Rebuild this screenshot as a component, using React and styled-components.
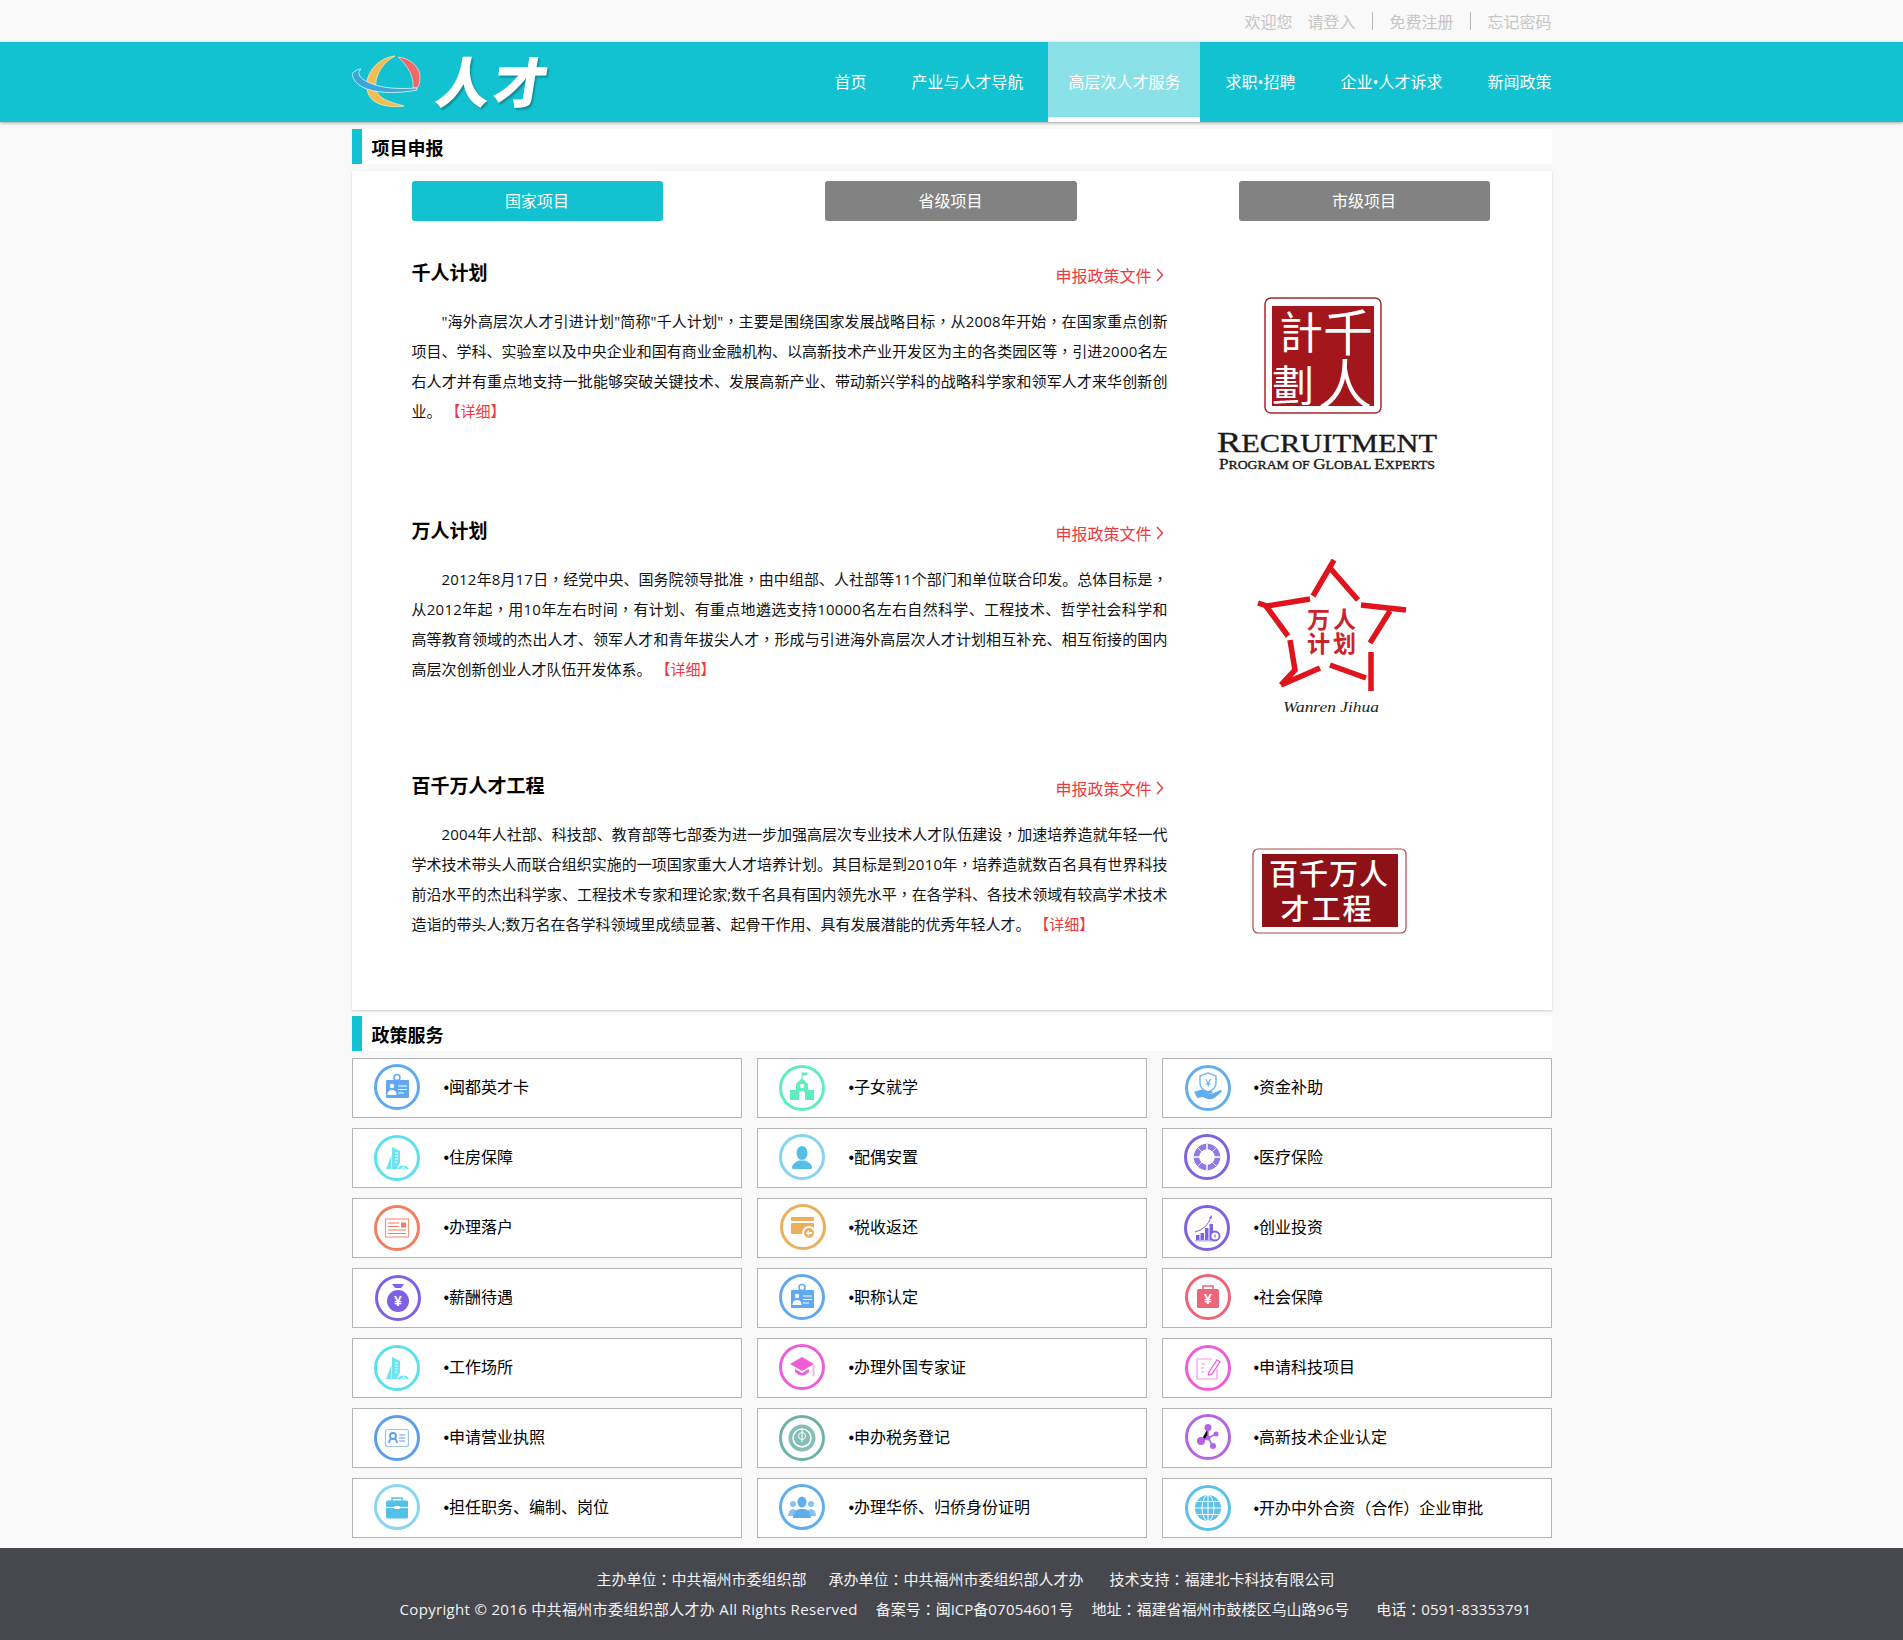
import React from "react";
import styled, { createGlobalStyle } from "styled-components";

const GlobalStyle = createGlobalStyle`
  * {
    box-sizing: border-box;
  }

  body {
    margin: 0;
    background-color: #f9f9f9;
    font-family: "Open Sans", "Noto Sans CJK SC", sans-serif;
    color: #111;
  }
`;

const Container = styled.div`
  width: 1200px;
  margin: 0 auto;
`;

const TopBar = styled.div`
  height: 42px;
`;

const TopLinks = styled(Container)`
  height: 100%;
  display: flex;
  justify-content: flex-end;
  align-items: center;
  font-size: 16px;
  color: #c6c6c6;
`;

const Welcome = styled.span`
  margin-right: 15px;
`;

const Divider = styled.i`
  width: 1px;
  height: 18px;
  margin: 0 16px 0 17px;
  background-color: #b9b9b9;
`;

const Header = styled.header`
  height: 80px;
  background-color: #13c2d0;
  box-shadow: 0 1px 3px rgba(0, 0, 0, 0.35);
`;

const HeaderInner = styled(Container)`
  height: 100%;
  display: flex;
  justify-content: space-between;
`;

const Logo = styled.div`
  display: flex;
  align-items: center;
  gap: 15px;
`;

const LogoText = styled.span`
  font-size: 54px;
  line-height: 1;
  font-weight: 900;
  color: #fff;
  letter-spacing: 3px;
  transform: skewX(-9deg);
  text-shadow: 2px 2px 2px rgba(0, 70, 80, 0.45);
`;

const Nav = styled.nav`
  display: flex;
  gap: 5px;
`;

const NavItem = styled.a`
  display: flex;
  align-items: center;
  padding: 2px 20px 0;
  font-size: 16px;
  color: #fff;
  background-color: ${(p) => (p.$active ? "#8ae1e8" : "transparent")};
  border-bottom: 5px solid ${(p) => (p.$active ? "#fff" : "transparent")};

  &:last-child {
    padding-right: 0;
  }
`;

const SectionTitle = styled.h2`
  height: 35px;
  margin: ${(p) => p.$top}px 0 0;
  padding-left: 10px;
  border-left: 10px solid #13c2d0;
  background-color: #fff;
  font-size: 18px;
  line-height: 38px;
  font-weight: 700;
  color: #000;
`;

const Panel = styled.div`
  height: 839px;
  margin-top: 7px;
  padding: 10px 62px 0 60px;
  background-color: #fff;
  box-shadow: 0 1px 2px rgba(0, 0, 0, 0.18);
`;

const Tabs = styled.div`
  display: flex;
  justify-content: space-between;
  margin-bottom: 26px;
`;

const Tab = styled.div`
  width: ${(p) => (p.$wide ? 252 : 251)}px;
  height: 40px;
  border-radius: 3px;
  background-color: ${(p) => (p.$active ? "#13c2d0" : "#828282")};
  color: #fff;
  font-size: 16px;
  line-height: 40px;
  text-align: center;
`;

const Project = styled.section`
  height: ${(p) => p.$height}px;
  display: flex;
`;

const ProjectBody = styled.div`
  width: 756px;
  flex-shrink: 0;
`;

const ProjectHead = styled.div`
  height: 50px;
  margin-bottom: 9px;
  padding-bottom: 1px;
  display: flex;
  justify-content: space-between;
  align-items: center;
`;

const ProjectName = styled.h3`
  margin: 0;
  font-size: 19px;
  font-weight: 700;
  color: #000;
`;

const PolicyLink = styled.a`
  display: flex;
  align-items: center;
  gap: 4px;
  margin: 6px 4px 0 0;
  font-size: 16px;
  color: #ef3a40;
`;

const Summary = styled.p`
  margin: 0;
  font-size: 15px;
  line-height: 30px;
  text-indent: 2em;
  text-align: justify;
  color: #111;
`;

const More = styled.a`
  color: #ef3a40;
`;

const Num = styled.span`
  letter-spacing: 0.2px;
`;

const Punct = styled.span`
  font-family: "Noto Sans CJK TC", sans-serif;
`;

const Seal = styled.div`
  padding: ${(p) => p.$top}px 0 0 ${(p) => p.$left}px;
`;

const ServiceGrid = styled.div`
  margin-top: 7px;
  display: grid;
  grid-template-columns: repeat(3, 390px);
  grid-auto-rows: 60px;
  column-gap: 15px;
  row-gap: 10px;
`;

const Service = styled.a`
  display: flex;
  align-items: flex-start;
  background-color: #fff;
  border: 1px solid #b5b5b5;
  font-size: 16px;
  color: #000;
`;

const ServiceIcon = styled.div`
  width: 91px;
  flex-shrink: 0;
  padding: ${(p) => p.$top}px 0 0 ${(p) => p.$left}px;
  line-height: 0;
`;

const ServiceLabel = styled.span`
  line-height: 57px;
`;

const Bullet = styled.span`
  font-family: "Liberation Sans", sans-serif;
`;

const Footer = styled.footer`
  height: 92px;
  margin-top: 10px;
  padding: 16px 0 0 28px;
  background-color: #47484d;
  color: #f2f2f2;
  font-size: 15px;
`;

const FooterLine = styled.div`
  height: 30px;
  line-height: 30px;
  display: flex;
  justify-content: center;
  gap: ${(p) => p.$gap}px;
`;

const FooterItem = styled.span`
  margin-left: ${(p) => p.$push || 0}px;
  letter-spacing: ${(p) => p.$spread || 0}px;
`;

// digits run a little wider than the font's, and the full-width ，：（） sit centred
function Copy({ children }) {
  return children.split(/(\d+|[，：（）])/).map((part, i) => {
    if (/^\d/.test(part)) return <Num key={i}>{part}</Num>;
    if (/^[，：（）]$/.test(part)) return <Punct key={i}>{part}</Punct>;
    return part;
  });
}

function Ring({ color, children }) {
  return (
    <svg width="46" height="46" viewBox="0 0 46 46">
      <circle cx="23" cy="23" r="21.5" fill="#fff" stroke={color} strokeWidth="3" />
      {children}
    </svg>
  );
}

const Badge = ({ c }) => (
  <Ring color={c}>
    <circle cx="23" cy="13.5" r="3" fill="none" stroke={c} strokeWidth="1.5" />
    <rect x="12" y="16" width="23" height="18" rx="1" fill={c} />
    <circle cx="18" cy="22" r="2.2" fill="#fff" />
    <path d="M13.5 31q0-5 4.5-5t4.500 5z" fill="#fff" />
    <path d="M24 22h9M24 25.500h9M24 29h6" stroke="#fff" strokeWidth="1.2" />
  </Ring>
);

const School = ({ c }) => (
  <Ring color={c}>
    <path d="M23 7.500v6M23 8h5v2h-5" fill={c} stroke={c} strokeWidth="1" />
    <path d="M23 13l6 6v6h6v10h-9v-6a3 3 0 0 0-6 0v6h-9V25h6v-6z" fill={c} />
    <circle cx="23" cy="21" r="2.200" fill="#fff" />
  </Ring>
);

const HandShield = ({ c }) => (
  <Ring color={c}>
    <path d="M23 8l8 3v7q0 6-8 9q-8-3-8-9v-7z" fill="none" stroke={c} strokeWidth="1.500" opacity="0.85" />
    <text x="23" y="22" fontSize="11" textAnchor="middle" fontFamily="Liberation Sans, sans-serif" fill={c}>¥</text>
    <path d="M9 27l6-2q3-1 6 1h5q2 0 1.500 2h-6l6 .500 8-3.500q2 0 1 2l-7 6q-3 2-7 1l-5-2-5 1z" fill={c} />
  </Ring>
);

const Towers = ({ c }) => (
  <Ring color="#5ce0ec">
    <path d="M12 34l5.500-14v14z" fill={c} />
    <path d="M18 34V12l8 4v11l-3 7z" fill={c} />
    <path d="M21 18h3M21 21h3M21 24h3M21 27h2" stroke="#fff" strokeWidth="1" />
    <path d="M23.500 34a6.500 6.500 0 0 1 11.500 0z" fill={c} />
    <path d="M29.500 28v6M27 34a3 3 0 0 1 5 0" fill="none" stroke="#fff" strokeWidth="0.800" />
  </Ring>
);

const Person = ({ c }) => (
  <Ring color="#87d4f2">
    <ellipse cx="23" cy="19" rx="5.500" ry="7" fill={c} />
    <path d="M13 34q0-5 7-7.500h6q7 2.500 7 7.500q0 1-2 1H15q-2 0-2-1z" fill={c} />
  </Ring>
);

const Medical = ({ c }) => (
  <Ring color={c}>
    <circle cx="23" cy="23" r="10.500" fill="none" stroke={c} strokeWidth="5.500" opacity="0.85" />
    <path d="M23 10v26M10 23h26" stroke="#fff" strokeWidth="1.500" />
    <path d="M23 16.500v13M16.500 23h13" stroke="#fff" strokeWidth="5" />
    <path d="M14 14l18 18M32 14L14 32" stroke="#fff" strokeWidth="0.800" />
  </Ring>
);

const Document = ({ c }) => (
  <Ring color={c}>
    <rect x="11.500" y="14" width="23" height="18" fill="none" stroke={c} strokeWidth="1.200" opacity="0.8" />
    <rect x="27" y="17.500" width="5" height="5" fill={c} />
    <path d="M14 18h11M14 21.500h11M14 25h18M14 28.500h18" stroke={c} strokeWidth="1.200" />
  </Ring>
);

const CardBack = ({ c }) => (
  <Ring color={c}>
    <rect x="11" y="13" width="23" height="4" rx="1" fill={c} />
    <rect x="11" y="19" width="23" height="11" rx="1" fill={c} />
    <circle cx="29" cy="29" r="7" fill="#fff" />
    <circle cx="29" cy="29" r="5" fill={c} />
    <path d="M26 29l3-3v2h3v2h-3v2z" fill="#fff" />
  </Ring>
);

const Growth = ({ c }) => (
  <Ring color={c}>
    <path d="M11 35h19v1.500H11z" fill={c} opacity="0.5" />
    <path d="M12 30h3.500v5H12zM16.500 28h3.500v7h-3.500zM21 23h3.500v12H21zM25.500 19h3.500v16h-3.500z" fill={c} />
    <path d="M11 27Q23 24 27 12" fill="none" stroke={c} strokeWidth="1" />
    <path d="M28 10l-.500 4-2.500-1.500z" fill={c} />
    <circle cx="31" cy="31" r="4.500" fill="#fff" stroke={c} strokeWidth="1.800" />
    <path d="M31 29.500v3" stroke={c} strokeWidth="1.200" />
  </Ring>
);

const MoneyBag = ({ c }) => (
  <Ring color={c}>
    <path d="M17 9h12l-3 4h-6z" fill={c} />
    <circle cx="23" cy="26" r="11" fill={c} />
    <text x="23" y="31" fontSize="14" fontWeight="700" textAnchor="middle" fontFamily="Liberation Sans, sans-serif" fill="#fff">¥</text>
  </Ring>
);

const YenCase = ({ c }) => (
  <Ring color={c}>
    <path d="M18 15v-3h10v3" fill="none" stroke={c} strokeWidth="1.500" />
    <rect x="12" y="15" width="22" height="19" rx="1.500" fill={c} />
    <text x="23" y="30" fontSize="14" fontWeight="700" textAnchor="middle" fontFamily="Liberation Sans, sans-serif" fill="#fff">¥</text>
  </Ring>
);

const GradCap = ({ c }) => (
  <Ring color={c}>
    <path d="M11 20l12-7 12 7-12 7z" fill={c} />
    <path d="M16 25l7 4 7-4v3q-7 7-14 0z" fill={c} />
    <path d="M34.500 21v11" stroke={c} strokeWidth="2" opacity="0.45" />
  </Ring>
);

const PenNote = ({ c }) => (
  <Ring color={c}>
    <path d="M27 14H12v20h20V24" fill="none" stroke={c} strokeWidth="1.200" opacity="0.65" />
    <path d="M16 19h4M16 23h3M16 27h3" stroke={c} strokeWidth="1.200" opacity="0.65" />
    <path d="M24 27l8-12 3 2-8 12-3.500 1z" fill="none" stroke={c} strokeWidth="1.300" />
  </Ring>
);

const License = ({ c }) => (
  <Ring color={c}>
    <rect x="11.500" y="14.500" width="23" height="17" rx="2" fill="none" stroke={c} strokeWidth="1.200" opacity="0.6" />
    <circle cx="19" cy="21" r="3" fill="none" stroke={c} strokeWidth="1.800" />
    <path d="M15 28q0-3 2-4M23 28q0-3-2-4" fill="none" stroke={c} strokeWidth="1.800" />
    <path d="M25 20h6M25 23h6M25 26h6" stroke={c} strokeWidth="1.200" />
  </Ring>
);

const TaxMark = ({ c }) => (
  <Ring color={c}>
    <circle cx="23" cy="23" r="13.500" fill={c} opacity="0.85" />
    <circle cx="23" cy="23" r="9" fill="none" stroke="#fff" strokeWidth="1.500" />
    <circle cx="23" cy="21" r="3.500" fill="none" stroke="#fff" strokeWidth="1" />
    <path d="M23 15v12M18 30q5 3 10 0" fill="none" stroke="#fff" strokeWidth="1.200" />
  </Ring>
);

const Molecule = ({ c }) => (
  <Ring color={c}>
    <path d="M23 14v10l-7 3M23 24l8-4M23 24l5 8" stroke={c} strokeWidth="1.500" />
    <circle cx="23" cy="13.500" r="3.500" fill={c} />
    <circle cx="23" cy="24" r="2.500" fill={c} />
    <circle cx="31" cy="20" r="2.500" fill={c} />
    <circle cx="16" cy="27" r="4" fill={c} />
    <circle cx="28" cy="32" r="3" fill={c} />
  </Ring>
);

const Briefcase = ({ c }) => (
  <Ring color="#8ad6f2">
    <path d="M18 17v-3h10v3" fill="none" stroke={c} strokeWidth="1.500" />
    <rect x="12" y="16.500" width="22" height="18" rx="1.500" fill={c} />
    <path d="M12 23.500h22" stroke="#fff" strokeWidth="1.200" />
    <rect x="20.500" y="22" width="5" height="3" fill="#fff" />
  </Ring>
);

const People = ({ c }) => (
  <Ring color={c}>
    <circle cx="14" cy="20" r="3" fill={c} opacity="0.75" />
    <circle cx="32" cy="20" r="3" fill={c} opacity="0.75" />
    <path d="M9 32q0-6 5-7l3 1v6zM37 32q0-6-5-7l-3 1v6z" fill={c} opacity="0.75" />
    <ellipse cx="23" cy="18" rx="4.500" ry="5.500" fill={c} />
    <path d="M14 34q0-7 6-9h6q6 2 6 9z" fill={c} />
  </Ring>
);

const Globe = ({ c }) => (
  <Ring color={c}>
    <circle cx="23" cy="23" r="13" fill={c} />
    <ellipse cx="23" cy="23" rx="6" ry="13" fill="none" stroke="#fff" strokeWidth="1" />
    <path d="M23 10v26M10 23h26M12 16.500h22M12 29.500h22" stroke="#fff" strokeWidth="1" />
  </Ring>
);

const services = [
  { label: "闽都英才卡", Icon: Badge, c: "#60a9ee", left: 21, top: 5 },
  { label: "子女就学", Icon: School, c: "#5eedbd", left: 21, top: 6 },
  { label: "资金补助", Icon: HandShield, c: "#62aeed", left: 22, top: 6 },
  { label: "住房保障", Icon: Towers, c: "#6fe3ee", left: 21, top: 6 },
  { label: "配偶安置", Icon: Person, c: "#54bfe9", left: 21, top: 5 },
  { label: "医疗保险", Icon: Medical, c: "#7f62e3", left: 21, top: 5 },
  { label: "办理落户", Icon: Document, c: "#ef7f60", left: 21, top: 6 },
  { label: "税收返还", Icon: CardBack, c: "#ebae5c", left: 22, top: 5 },
  { label: "创业投资", Icon: Growth, c: "#7f62e3", left: 21, top: 6 },
  { label: "薪酬待遇", Icon: MoneyBag, c: "#7f62e3", left: 22, top: 6 },
  { label: "职称认定", Icon: Badge, c: "#60a9ee", left: 21, top: 5 },
  { label: "社会保障", Icon: YenCase, c: "#ee6478", left: 22, top: 5 },
  { label: "工作场所", Icon: Towers, c: "#6fe3ee", left: 21, top: 6 },
  { label: "办理外国专家证", Icon: GradCap, c: "#ef5ed8", left: 21, top: 5 },
  { label: "申请科技项目", Icon: PenNote, c: "#ef5ed8", left: 22, top: 6 },
  { label: "申请营业执照", Icon: License, c: "#5b9fe8", left: 21, top: 6 },
  { label: "申办税务登记", Icon: TaxMark, c: "#6fb3a8", left: 21, top: 6 },
  { label: "高新技术企业认定", Icon: Molecule, c: "#b565e3", left: 22, top: 5 },
  { label: "担任职务、编制、岗位", Icon: Briefcase, c: "#54c0e9", left: 21, top: 5 },
  { label: "办理华侨、归侨身份证明", Icon: People, c: "#62aeed", left: 21, top: 5 },
  { label: "开办中外合资（合作）企业审批", Icon: Globe, c: "#5cc0ea", left: 22, top: 6 },
];

const Chevron = () => (
  <svg width="8" height="14" viewBox="0 0 8 14">
    <path d="M1 1l5.500 6L1 13" fill="none" stroke="#ef3a40" strokeWidth="1.400" />
  </svg>
);

const RecruitmentSeal = () => (
  <svg width="222" height="176" viewBox="0 0 222 176">
    <rect x="48" y="1" width="116" height="115" rx="6" fill="#fff" stroke="#a5272b" strokeWidth="1.500" />
    <rect x="55" y="9" width="102" height="100" fill="#a3161c" />
    <g fill="#fff" fontFamily="Noto Sans CJK TC, sans-serif" fontWeight="400" textAnchor="middle">
      <text x="131" y="54" fontSize="50">千</text>
      <text x="128" y="108" fontSize="54">人</text>
      <text x="84" y="52" fontSize="44">計</text>
      <text x="76" y="104" fontSize="42">劃</text>
    </g>
    <g fill="#1d1a1a" stroke="#1d1a1a" strokeWidth="0.350" fontFamily="Liberation Serif, serif">
      <text x="0" y="155" fontSize="25" textLength="220" lengthAdjust="spacingAndGlyphs">
        <tspan fontSize="30">R</tspan>ECRUITMENT
      </text>
      <text x="2" y="172" fontSize="12" textLength="216" lengthAdjust="spacingAndGlyphs">
        <tspan fontSize="15">P</tspan>ROGRAM OF <tspan fontSize="15">G</tspan>LOBAL <tspan fontSize="15">E</tspan>XPERTS
      </text>
    </g>
  </svg>
);

const StarSeal = () => (
  <svg width="150" height="156" viewBox="0 0 150 156">
    <path
      d="M77 1L56 37M73 9l28 32M1 44l9 3 43-7M9 47l22 30M104 46l45 5M133 52l-20 32M33 81l5 30-14 15M24 126l39-17M114 93v39M73 106l36 13"
      fill="none"
      stroke="#e0141c"
      strokeWidth="5.500"
    />
    <g fill="#c8242c" fontFamily="Noto Sans CJK SC, sans-serif" fontWeight="700" textAnchor="middle">
      <text x="76" y="69" fontSize="23" letterSpacing="3">万人</text>
      <text x="76" y="93" fontSize="23" letterSpacing="3">计划</text>
    </g>
    <text x="26" y="153" fontSize="15" fontStyle="italic" fill="#222" fontFamily="Liberation Serif, serif" textLength="96" lengthAdjust="spacingAndGlyphs">
      Wanren Jihua
    </text>
  </svg>
);

const TalentSeal = () => (
  <svg width="156" height="88" viewBox="0 0 156 88">
    <rect x="1" y="1" width="153" height="84" rx="5" fill="#fff" stroke="#b5474b" strokeWidth="1.200" />
    <rect x="10" y="6" width="136" height="73" fill="#8d1116" />
    <g fill="#fff" fontFamily="Noto Sans CJK SC, sans-serif" fontWeight="500" textAnchor="middle">
      <text x="77" y="37" fontSize="29" letterSpacing="1">百千万人</text>
      <text x="75" y="72" fontSize="29" letterSpacing="2">才工程</text>
    </g>
  </svg>
);

const projects = [
  {
    name: "千人计划",
    height: 258,
    seal: <RecruitmentSeal />,
    sealTop: 50,
    sealLeft: 49,
    text: "\"海外高层次人才引进计划\"简称\"千人计划\"，主要是围绕国家发展战略目标，从2008年开始，在国家重点创新项目、学科、实验室以及中央企业和国有商业金融机构、以高新技术产业开发区为主的各类园区等，引进2000名左右人才并有重点地支持一批能够突破关键技术、发展高新产业、带动新兴学科的战略科学家和领军人才来华创新创业。",
  },
  {
    name: "万人计划",
    height: 255,
    seal: <StarSeal />,
    sealTop: 54,
    sealLeft: 89,
    text: "2012年8月17日，经党中央、国务院领导批准，由中组部、人社部等11个部门和单位联合印发。总体目标是，从2012年起，用10年左右时间，有计划、有重点地遴选支持10000名左右自然科学、工程技术、哲学社会科学和高等教育领域的杰出人才、领军人才和青年拔尖人才，形成与引进海外高层次人才计划相互补充、相互衔接的国内高层次创新创业人才队伍开发体系。",
  },
  {
    name: "百千万人才工程",
    height: 250,
    seal: <TalentSeal />,
    sealTop: 88,
    sealLeft: 84,
    text: "2004年人社部、科技部、教育部等七部委为进一步加强高层次专业技术人才队伍建设，加速培养造就年轻一代学术技术带头人而联合组织实施的一项国家重大人才培养计划。其目标是到2010年，培养造就数百名具有世界科技前沿水平的杰出科学家、工程技术专家和理论家;数千名具有国内领先水平，在各学科、各技术领域有较高学术技术造诣的带头人;数万名在各学科领域里成绩显著、起骨干作用、具有发展潜能的优秀年轻人才。",
  },
];

const navItems = ["首页", "产业与人才导航", "高层次人才服务", "求职•招聘", "企业•人才诉求", "新闻政策"];

export default function App() {
  return (
    <>
      <GlobalStyle />
      <TopBar>
        <TopLinks>
          <Welcome>欢迎您</Welcome>
          <span>请登入</span>
          <Divider />
          <span>免费注册</span>
          <Divider />
          <span>忘记密码</span>
        </TopLinks>
      </TopBar>

      <Header>
        <HeaderInner>
          <Logo>
            <svg width="70" height="54" viewBox="0 0 70 54">
              <path d="M43 1C22 3 8 26 18 42c5 8 20 11 34 9C38 47 26 44 24 34 22 22 30 8 43 1z" fill="#f2bd55" stroke="#fbe6b4" strokeWidth="0.800" />
              <path d="M46 2c12 1 22 10 22 20 0 5-1 9-3 11l-4 0c1-12-5-22-15-31z" fill="#f0686a" stroke="#fbd2d0" strokeWidth="0.800" />
              <path d="M0 19C2 16 6 14 9 14 4 18 8 24 18 28c14 6 30 6 47 5v2c-16 3-36 4-50-1C6 31 1 25 0 19z" fill="#3aa6de" stroke="#e4f6fc" strokeWidth="0.800" />
            </svg>
            <LogoText>人才</LogoText>
          </Logo>
          <Nav>
            {navItems.map((item) => (
              <NavItem key={item} $active={item === "高层次人才服务"}>
                {item}
              </NavItem>
            ))}
          </Nav>
        </HeaderInner>
      </Header>

      <Container>
        <SectionTitle $top={7}>项目申报</SectionTitle>
        <Panel>
          <Tabs>
            <Tab $active>国家项目</Tab>
            <Tab $wide>省级项目</Tab>
            <Tab>市级项目</Tab>
          </Tabs>
          {projects.map((project) => (
            <Project key={project.name} $height={project.height}>
              <ProjectBody>
                <ProjectHead>
                  <ProjectName>{project.name}</ProjectName>
                  <PolicyLink>
                    申报政策文件
                    <Chevron />
                  </PolicyLink>
                </ProjectHead>
                <Summary>
                  <Copy>{project.text}</Copy> <More>【详细】</More>
                </Summary>
              </ProjectBody>
              <Seal $top={project.sealTop} $left={project.sealLeft}>
                {project.seal}
              </Seal>
            </Project>
          ))}
        </Panel>

        <SectionTitle $top={6}>政策服务</SectionTitle>
        <ServiceGrid>
          {services.map(({ label, Icon, c, left, top }) => (
            <Service key={label}>
              <ServiceIcon $left={left} $top={top}>
                <Icon c={c} />
              </ServiceIcon>
              <ServiceLabel>
                <Bullet>•</Bullet>
                <Copy>{label}</Copy>
              </ServiceLabel>
            </Service>
          ))}
        </ServiceGrid>
      </Container>

      <Footer>
        <FooterLine $gap={22}>
          <FooterItem><Copy>主办单位：中共福州市委组织部</Copy></FooterItem>
          <FooterItem><Copy>承办单位：中共福州市委组织部人才办</Copy></FooterItem>
          <FooterItem $push={4}><Copy>技术支持：福建北卡科技有限公司</Copy></FooterItem>
        </FooterLine>
        <FooterLine $gap={18}>
          <FooterItem $spread={0.32}>Copyright © 2016 中共福州市委组织部人才办 All Rights Reserved</FooterItem>
          <FooterItem><Copy>备案号：闽ICP备07054601号</Copy></FooterItem>
          <FooterItem><Copy>地址：福建省福州市鼓楼区乌山路96号</Copy></FooterItem>
          <FooterItem $push={9}><Copy>电话：0591-83353791</Copy></FooterItem>
        </FooterLine>
      </Footer>
    </>
  );
}
